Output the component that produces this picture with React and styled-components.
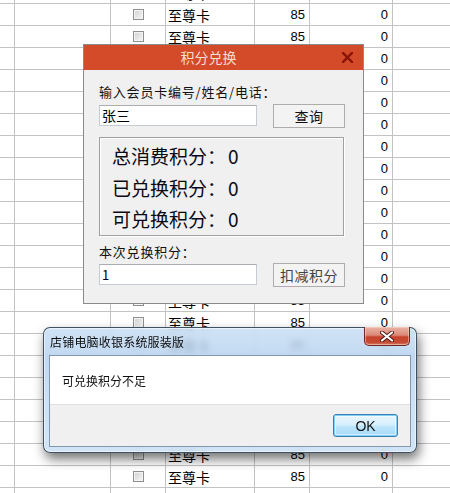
import React from "react";
import styled, { createGlobalStyle } from "styled-components";

const GlobalStyle = createGlobalStyle`
  html, body {
    margin: 0;
    padding: 0;
    background: #ffffff;
    overflow: hidden;
  }
  body {
    font-family: "Noto Sans CJK SC", "Liberation Sans", sans-serif;
    color: #000;
  }
`;

const Page = styled.div`
  position: relative;
  width: 450px;
  height: 493px;
  overflow: hidden;
  background: #fff;
`;

const Grid = styled.div`
  margin-top: -18px;
`;

const Row = styled.div`
  display: grid;
  grid-template-columns: 15px 96px 55px 89px 55px 83px 1fr;
  height: 22px;
  box-sizing: border-box;
  border-bottom: 1px solid #c3c3c3;
`;

const Cell = styled.div`
  display: flex;
  align-items: center;
  justify-content: ${(p) => p.$align || "flex-start"};
  padding: 0 ${(p) => (p.$align === "flex-end" ? "4px" : "0")} 0
    ${(p) => (p.$align === "flex-start" ? "2px" : "0")};
  border-right: ${(p) => (p.$last ? "none" : "1px solid #c3c3c3")};
  font-size: ${(p) => (p.$num ? "13px" : "14px")};
  font-family: ${(p) =>
    p.$num
      ? '"Liberation Sans", Arial, sans-serif'
      : '"Noto Sans CJK SC", sans-serif'};
  line-height: 1;
  overflow: hidden;
`;

const Check = styled.span`
  width: 11px;
  height: 11px;
  box-sizing: border-box;
  border: 1px solid #8e8f8f;
  background: linear-gradient(135deg, #d0d0d0 0%, #e8e8e8 60%, #f6f6f6 100%);
  box-shadow: inset 0 0 0 1px #f4f4f4;
`;

/* ---------- 积分兑换 dialog ---------- */

const Dialog = styled.div`
  position: absolute;
  left: 83px;
  top: 44px;
  width: 281px;
  height: 260px;
  box-sizing: border-box;
  border: 1px solid #8a8a8a;
  background: #f0f0f0;
  display: flex;
  flex-direction: column;
`;

const TitleBar = styled.div`
  height: 25px;
  background: #d34b29;
  display: flex;
  align-items: center;
  position: relative;
`;

const TitleText = styled.div`
  flex: 1;
  text-align: center;
  padding-right: 30px;
  color: #f6ddd4;
  font-size: 14px;
  line-height: 25px;
`;

const CloseCross = styled.svg`
  position: absolute;
  right: 10px;
  top: 7px;
`;

const Body = styled.div`
  display: flex;
  flex-direction: column;
  padding: 14px 18px 0 15px;
`;

const Label = styled.div`
  font-size: 13px;
  line-height: 16px;
  height: 16px;
  letter-spacing: 0.8px;
  color: #111;
  margin-top: ${(p) => p.$mt || 0}px;
`;

const FieldRow = styled.div`
  display: flex;
  align-items: center;
  justify-content: space-between;
  margin-top: ${(p) => p.$mt || 0}px;
  height: 23px;
`;

const TextInput = styled.div`
  width: 158px;
  height: 21px;
  box-sizing: border-box;
  border: 1px solid #c6ccd4;
  border-top-color: #abadb3;
  background: #fff;
  padding-left: 2px;
  font-size: ${(p) => p.$fs || 13}px;
  line-height: 19px;
  color: #000;
`;

const PushButton = styled.div`
  width: 72px;
  height: 24px;
  box-sizing: border-box;
  border: 1px solid #adadad;
  background: #f3f3f3;
  display: flex;
  align-items: center;
  justify-content: center;
  font-size: 14px;
  color: ${(p) => p.$color || "#111"};
  letter-spacing: 0.5px;
`;

const GroupBox = styled.div`
  margin-top: 10px;
  width: 245px;
  height: 99px;
  box-sizing: border-box;
  border: 1px solid #a0a0a0;
  box-shadow: inset 1px 1px 0 #fff, 1px 1px 0 #fff;
  padding: 2px 0 0 12px;
  display: flex;
  flex-direction: column;
`;

const Stat = styled.div`
  font-size: 19px;
  line-height: 31.5px;
  height: 31.5px;
  color: #0a0a14;
  display: flex;
  gap: 2px;
`;

/* ---------- message box ---------- */

const MsgBox = styled.div`
  position: absolute;
  left: 43px;
  top: 327px;
  width: 374px;
  height: 126px;
  box-sizing: border-box;
  border-radius: 7px;
  border: 1px solid rgba(40, 55, 75, 0.85);
  background: linear-gradient(
    180deg,
    rgba(200, 222, 244, 0.82) 0%,
    rgba(178, 208, 238, 0.82) 25%,
    rgba(196, 220, 244, 0.85) 60%,
    rgba(205, 226, 246, 0.9) 100%
  );
  backdrop-filter: blur(3px);
  box-shadow: 0 0 0 1px rgba(255, 255, 255, 0.55) inset,
    2px 6px 12px rgba(0, 0, 0, 0.55);
  display: flex;
  flex-direction: column;
`;

const MsgTitle = styled.div`
  height: 27px;
  padding-left: 6px;
  display: flex;
  align-items: center;
  font-size: 12px;
  color: #0c0c0c;
  letter-spacing: 0.2px;
`;

const RedClose = styled.div`
  position: absolute;
  top: -1px;
  right: 6px;
  width: 46px;
  height: 19px;
  box-sizing: border-box;
  border: 1px solid #6a2a22;
  border-top: none;
  border-radius: 0 0 5px 5px;
  background: linear-gradient(
    180deg,
    #eab2a6 0%,
    #dc8a78 45%,
    #c8432e 55%,
    #c54a32 85%,
    #d8826a 100%
  );
  box-shadow: inset 0 0 0 1px rgba(255, 220, 210, 0.5);
  display: flex;
  align-items: center;
  justify-content: center;
`;

const Client = styled.div`
  margin: 0 5px 0 5px;
  height: 92px;
  box-sizing: border-box;
  border: 1px solid #8497ad;
  display: flex;
  flex-direction: column;
`;

const MsgArea = styled.div`
  height: 48px;
  background: #fff;
  display: flex;
  align-items: center;
  padding-left: 12px;
  font-size: 12px;
  color: #111;
`;

const ButtonArea = styled.div`
  flex: 1;
  background: #f0f0f0;
  border-top: 1px solid #dfdfdf;
  display: flex;
  align-items: center;
  justify-content: flex-end;
  padding-right: 12px;
`;

const OkButton = styled.div`
  width: 65px;
  height: 23px;
  box-sizing: border-box;
  border: 1px solid #3c7fb1;
  border-radius: 3px;
  background: linear-gradient(180deg, #eaf6fd 0%, #d9f0fc 45%, #bee6fd 55%, #a7d9f5 100%);
  box-shadow: inset 0 0 0 1px #7fd0f5, inset 0 0 0 2px rgba(255, 255, 255, 0.5);
  display: flex;
  align-items: center;
  justify-content: center;
  font-family: "Liberation Sans", Arial, sans-serif;
  font-size: 14px;
  color: #111;
`;

const rows = Array.from({ length: 24 });

export default function App() {
  return (
    <Page>
      <GlobalStyle />
      <Grid>
        {rows.map((_, i) => (
          <Row key={i}>
            <Cell />
            <Cell />
            <Cell $align="center">
              <Check />
            </Cell>
            <Cell $align="flex-start">至尊卡</Cell>
            <Cell $align="flex-end" $num>
              85
            </Cell>
            <Cell $align="flex-end" $num>
              0
            </Cell>
            <Cell $last />
          </Row>
        ))}
      </Grid>

      <Dialog>
        <TitleBar>
          <TitleText>积分兑换</TitleText>
          <CloseCross width="11" height="11" viewBox="0 0 11 11">
            <path
              d="M1 1 L10 10 M10 1 L1 10"
              stroke="#8a1308"
              strokeWidth="2.4"
              strokeLinecap="square"
            />
          </CloseCross>
        </TitleBar>
        <Body>
          <Label>输入会员卡编号/姓名/电话：</Label>
          <FieldRow $mt={4}>
            <TextInput $fs={14}>张三</TextInput>
            <PushButton>查询</PushButton>
          </FieldRow>
          <GroupBox>
            <Stat>
              <span>总消费积分：</span>
              <span>0</span>
            </Stat>
            <Stat>
              <span>已兑换积分：</span>
              <span>0</span>
            </Stat>
            <Stat>
              <span>可兑换积分：</span>
              <span>0</span>
            </Stat>
          </GroupBox>
          <Label $mt={8}>本次兑换积分：</Label>
          <FieldRow $mt={3}>
            <TextInput>1</TextInput>
            <PushButton $color="#444">扣减积分</PushButton>
          </FieldRow>
        </Body>
      </Dialog>

      <MsgBox>
        <MsgTitle>店铺电脑收银系统服装版</MsgTitle>
        <RedClose>
          <svg width="14" height="11" viewBox="0 0 14 11">
            <path
              d="M2 1.5 L12 9.5 M12 1.5 L2 9.5"
              stroke="#4a1a14"
              strokeWidth="4"
              strokeLinecap="round"
            />
            <path
              d="M2 1.5 L12 9.5 M12 1.5 L2 9.5"
              stroke="#ffffff"
              strokeWidth="2.2"
              strokeLinecap="round"
            />
          </svg>
        </RedClose>
        <Client>
          <MsgArea>可兑换积分不足</MsgArea>
          <ButtonArea>
            <OkButton>OK</OkButton>
          </ButtonArea>
        </Client>
      </MsgBox>
    </Page>
  );
}
